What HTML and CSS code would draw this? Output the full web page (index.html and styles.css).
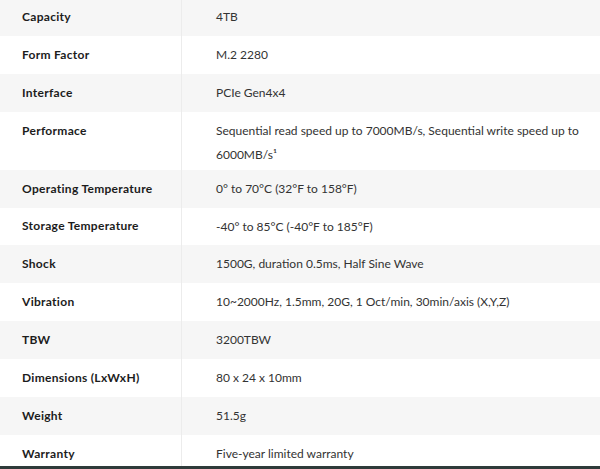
FILE: index.html
```html
<!DOCTYPE html>
<html lang="en">
<head>
<meta charset="utf-8">
<title>Specifications</title>
<link rel="stylesheet" href="styles.css">
</head>
<body>
<div class="specs">
  <div class="row"><div class="label">Capacity</div><div class="value">4TB</div></div>
  <div class="row"><div class="label">Form Factor</div><div class="value">M.2 2280</div></div>
  <div class="row"><div class="label">Interface</div><div class="value">PCIe Gen4x4</div></div>
  <div class="row"><div class="label">Performace</div><div class="value">Sequential read speed up to 7000MB/s, Sequential write speed up to 6000MB/s¹</div></div>
  <div class="row"><div class="label">Operating Temperature</div><div class="value">0° to 70°C (32°F to 158°F)</div></div>
  <div class="row"><div class="label">Storage Temperature</div><div class="value">-40° to 85°C (-40°F to 185°F)</div></div>
  <div class="row"><div class="label">Shock</div><div class="value">1500G, duration 0.5ms, Half Sine Wave</div></div>
  <div class="row"><div class="label">Vibration</div><div class="value">10~2000Hz, 1.5mm, 20G, 1 Oct/min, 30min/axis (X,Y,Z)</div></div>
  <div class="row"><div class="label">TBW</div><div class="value">3200TBW</div></div>
  <div class="row"><div class="label">Dimensions (LxWxH)</div><div class="value">80 x 24 x 10mm</div></div>
  <div class="row"><div class="label">Weight</div><div class="value">51.5g</div></div>
  <div class="row"><div class="label">Warranty</div><div class="value">Five-year limited warranty</div></div>
</div>
<div class="bottom-bar"></div>
</body>
</html>
```

FILE: styles.css
```css
html, body {
  margin: 0;
  padding: 0;
  background: #ffffff;
  overflow: hidden;
}
body {
  font-family: Lato, "Noto Sans", sans-serif;
  font-size: 12px;
  color: #2b2b2b;
}
.specs {
  margin-top: -2px;
  display: flex;
  flex-direction: column;
}
.row {
  display: grid;
  grid-template-columns: 181px 1fr;
}
.row:nth-child(odd) {
  background: #f6f6f6;
}
.label {
  padding: 8.95px 10px 8.95px 22px;
  line-height: 20px;
  font-weight: 700;
  letter-spacing: 0.3px;
  color: #1c1c1c;
}
.value {
  padding: 7px 8px 3px 34px;
  line-height: 24px;
  border-left: 1px solid #ececec;
  color: #333333;
}
.bottom-bar {
  position: fixed;
  left: 0;
  right: 0;
  bottom: 0;
  height: 3px;
  background: #2f3b3a;
}
```
